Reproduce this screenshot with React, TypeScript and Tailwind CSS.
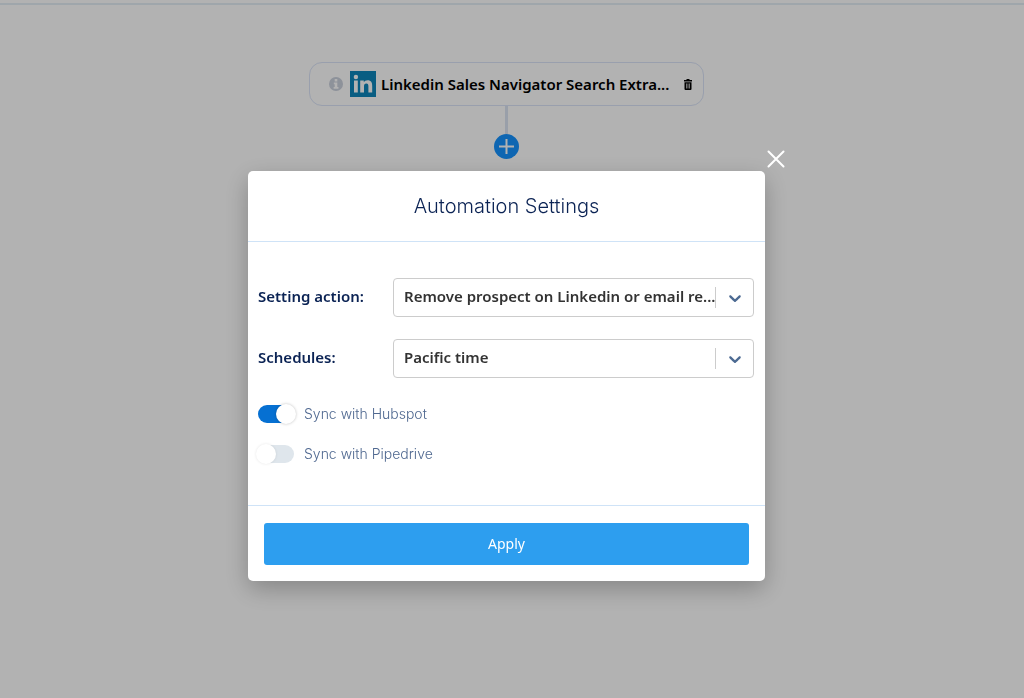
import { useState } from 'react';
import type { ReactNode } from 'react';

const ACTIONS = ['Remove prospect on Linkedin or email re...', 'Pause prospect on reply', 'Do nothing'];
const SCHEDULES = ['Pacific time', 'Central time', 'Eastern time'];

type SelectFieldProps = {
  id: string;
  label: string;
  options: string[];
  value: string;
  onChange: (value: string) => void;
};

function SelectField({ id, label, options, value, onChange }: SelectFieldProps) {
  return (
    <div className="flex items-center">
      <label htmlFor={id} className="w-[135px] shrink-0 pb-1 text-[15px] leading-5 font-semibold text-[#0b2354]">
        {label}
      </label>
      <div className="grid h-[39px] min-w-0 flex-1 items-center rounded border border-[#cccccc] bg-white">
        <select
          id={id}
          value={value}
          onChange={(e) => onChange(e.target.value)}
          className="col-start-1 row-start-1 h-full w-full min-w-0 appearance-none truncate rounded bg-transparent pr-8 pb-1 pl-[10px] text-[15px] leading-5 font-semibold text-[#333333] outline-none"
        >
          {options.map((o) => (
            <option key={o}>{o}</option>
          ))}
        </select>
        {/* Divider + chevron */}
        <div className="pointer-events-none col-start-1 row-start-1 flex items-center justify-self-end">
          <span className="h-[21px] w-px bg-[#cccccc]" />
          <span className="flex w-[37px] justify-center">
            <svg viewBox="0 0 20 20" className="size-5" fill="#4c6a92">
              <path d="M4.516 7.548c.436-.446 1.043-.481 1.576 0L10 11.295l3.908-3.747c.533-.481 1.141-.446 1.574 0 .436.445.408 1.197 0 1.615-.406.418-4.695 4.502-4.695 4.502a1.095 1.095 0 0 1-1.576 0S4.924 9.581 4.516 9.163s-.436-1.170 0-1.615z" />
            </svg>
          </span>
        </div>
      </div>
    </div>
  );
}

type ToggleProps = {
  checked: boolean;
  onChange: (checked: boolean) => void;
  children: ReactNode;
};

function Toggle({ checked, onChange, children }: ToggleProps) {
  return (
    <label className="flex h-5 cursor-pointer items-center gap-[10px] font-[Inter,sans-serif] text-sm font-light text-[#4f6890]">
      <input
        type="checkbox"
        role="switch"
        checked={checked}
        onChange={(e) => onChange(e.target.checked)}
        className="flex h-[18px] w-9 shrink-0 cursor-pointer appearance-none items-center rounded-full bg-[#dfe6ec] before:size-5 before:-translate-x-0.5 before:rounded-full before:bg-white before:shadow-[0_0_3px_rgba(0,0,0,0.1)] before:content-[''] checked:bg-[#0670d2] checked:before:translate-x-[18px] checked:before:shadow-[0_0_3px_rgba(0,0,0,0.25)]"
      />
      {children}
    </label>
  );
}

function LinkedinIcon() {
  return (
    <svg viewBox="0 0 26 26" className="size-[26px] shrink-0">
      <rect width="26" height="26" fill="#0d86ba" />
      <circle cx="5.900" cy="6" r="2.200" fill="#fff" />
      <path
        fill="#fff"
        d="M4 9.500h3.800v12H4zM10.200 9.500h3.600v1.700c.7-1.200 2-2 3.800-2 3.600 0 4.600 2.300 4.600 5.600v6.700h-3.800v-6c0-1.700-.4-3-2.100-3-1.700 0-2.300 1.200-2.300 3v6h-3.800z"
      />
    </svg>
  );
}

function Workflow() {
  return (
    <main className="flex flex-col items-center pt-[57px] pr-[11px]">
      <div className="flex h-11 w-[395px] items-center rounded-[13px] border border-[#dbe4f8] pr-[9px] pl-[19px]">
        <svg viewBox="0 0 16 16" className="size-[14px] shrink-0">
          <circle cx="8" cy="8" r="8" fill="#cbd1dd" />
          <path fill="#fff" d="M6.500 2.300h3v2.700h-3zM5.500 6.300h4v5h1.300v2H5.300v-2h1.200V8.300h-1z" />
        </svg>
        <span className="ml-[7px] flex">
          <LinkedinIcon />
        </span>
        <span className="ml-[5px] min-w-0 flex-1 text-[15px] leading-5 font-semibold whitespace-nowrap text-black">
          Linkedin Sales Navigator Search Extra...
        </span>
        <button type="button" aria-label="Delete step" className="flex w-3 justify-center">
          <svg viewBox="0 0 16 22" className="h-[11px] w-2" fill="#000">
            <path d="M5 0h6v2h5v3H0V2h5z" />
            <path fillRule="evenodd" d="M1 6.500h14V20a2 2 0 0 1-2 2H3a2 2 0 0 1-2-2zM4 9v10h1.300V9zm3.300 0v10h1.400V9zm3.400 0v10H12V9z" />
          </svg>
        </button>
      </div>
      <div className="h-7 w-[3px] bg-[#dbe4f3]" />
      <button
        type="button"
        aria-label="Add step"
        className="flex size-[25px] items-center justify-center rounded-full bg-[#1593ff]"
      >
        <svg viewBox="0 0 15 15" className="size-[15px]" stroke="#fff" strokeWidth="2">
          <path d="M7.500 0v15M0 7.500h15" />
        </svg>
      </button>
    </main>
  );
}

export default function App() {
  const [open, setOpen] = useState(true);
  const [action, setAction] = useState(ACTIONS[0]);
  const [schedule, setSchedule] = useState(SCHEDULES[0]);
  const [hubspot, setHubspot] = useState(true);
  const [pipedrive, setPipedrive] = useState(false);

  return (
    <div className="min-h-screen bg-white pt-[3px] font-['Noto_Sans',sans-serif]">
      <div className="h-0.5 bg-[#e4eef5]" />
      <Workflow />

      {open && (
        <div className="fixed inset-0 flex items-start justify-center overflow-auto bg-black/30 pt-[171px] pr-[11px]">
          <div
            role="dialog"
            aria-labelledby="settings-title"
            className="relative w-full max-w-[517px] rounded-[5px] bg-white shadow-[0_8px_24px_rgba(0,0,0,0.25)]"
          >
            <button
              type="button"
              aria-label="Close"
              onClick={() => setOpen(false)}
              className="absolute -top-[21px] -right-5"
            >
              <svg viewBox="0 0 18 18" className="size-[18px]" stroke="#fff" strokeWidth="2" strokeLinecap="round">
                <path d="M1.500 1.500l15 15M16.500 1.500l-15 15" />
              </svg>
            </button>

            <header className="flex h-[71px] items-center justify-center border-b border-[#cfe3f7]">
              <h2 id="settings-title" className="font-[Inter,sans-serif] text-xl font-light text-[#0b2354]">
                Automation Settings
              </h2>
            </header>

            <div className="pt-9 pr-[11px] pb-[41px] pl-[10px]">
              <div className="flex flex-col gap-[22px]">
                <SelectField id="action" label="Setting action:" options={ACTIONS} value={action} onChange={setAction} />
                <SelectField id="schedule" label="Schedules:" options={SCHEDULES} value={schedule} onChange={setSchedule} />
              </div>
              <div className="mt-[26px] flex flex-col items-start gap-5">
                <Toggle checked={hubspot} onChange={setHubspot}>
                  Sync with Hubspot
                </Toggle>
                <Toggle checked={pipedrive} onChange={setPipedrive}>
                  Sync with Pipedrive
                </Toggle>
              </div>
            </div>

            <footer className="border-t border-[#cfe3f7] px-4 pt-[17px] pb-4">
              <button
                type="button"
                onClick={() => setOpen(false)}
                className="h-[42px] w-full rounded-[3px] bg-[#2d9eef] text-sm text-white"
              >
                Apply
              </button>
            </footer>
          </div>
        </div>
      )}
    </div>
  );
}
